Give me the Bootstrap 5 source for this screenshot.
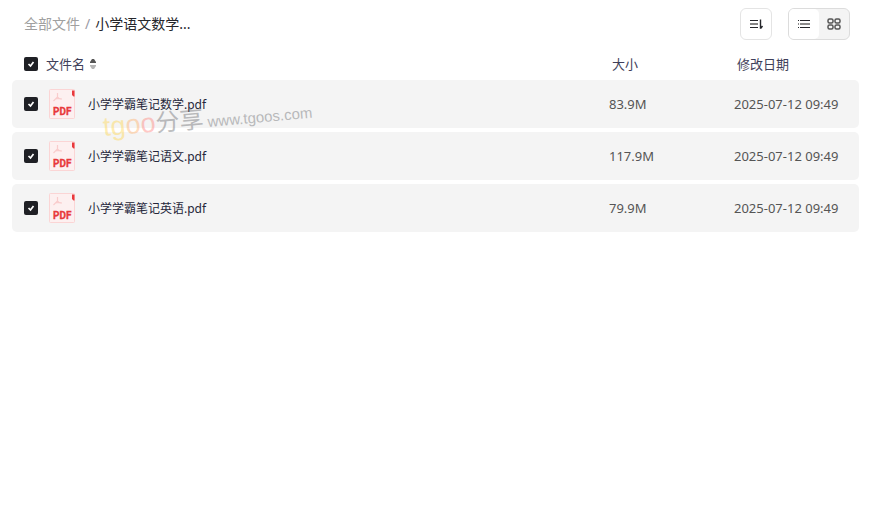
<!DOCTYPE html>
<html lang="zh-CN">
<head>
<meta charset="utf-8">
<meta name="viewport" content="width=device-width, initial-scale=1">
<title>全部文件</title>
<link href="https://cdn.jsdelivr.net/npm/bootstrap@5.3.0/dist/css/bootstrap.min.css" rel="stylesheet">
<style>
body{font-family:"Noto Sans","Noto Sans CJK SC",sans-serif;font-size:13px;line-height:20px;color:#3f3f5a;background:#fff}
.topbar{height:48px;padding:0 24px}
.crumbs{font-size:14px;--bs-breadcrumb-divider-color:#9a9aa5;--bs-breadcrumb-item-padding-x:5px}
.crumbs a{color:#a0a0a0}
.crumbs .active{color:#25262b}
.tool{width:32px;height:32px;border:1px solid #e4e4e4;border-radius:6px;background:#fff;color:#25262b}
.views{border:1px solid #dcdcdc;border-radius:6px;background:#f4f4f4}
.views button{width:30px;height:30px;border:0;border-radius:5px;background:none;color:#555}
.views .on{background:#fff;color:#25262b}
.listing{padding:0 15px 0 12px}
.files{border-collapse:separate;border-spacing:0 4px;table-layout:fixed;margin-top:-4px}
.files th{height:28px;padding:4px 0 0;font-weight:400}
.files td{height:48px;padding:0;background:#f4f4f4;color:#555}
.files td:first-child{border-radius:5px 0 0 5px}
.files td:last-child{border-radius:0 5px 5px 0}
.files .pick{padding-left:12px}
.files th.size,.files th.date{padding-left:3px}
.c-size,.c-date{width:125px}
.sorter{margin-left:4px}
.fname{font-size:12px;color:#25263a;margin-left:12px;padding-top:2px}
.ficon{margin-left:10px}
.form-check-input{width:14px;height:14px;margin:0;border-radius:2px!important;border:0}
.form-check-input:checked{background-color:#1f2025;background-size:14px 14px;background-image:url("data:image/svg+xml,%3Csvg xmlns='http://www.w3.org/2000/svg' viewBox='0 0 14 14'%3E%3Cpath d='M4.5 7l2 2L9.500 5' fill='none' stroke='%23fff' stroke-width='1.700'/%3E%3C/svg%3E")}
.pdfmark{font:bold 10px "Roboto",sans-serif;fill:#e8393c;stroke:#e8393c;stroke-width:.3}
.stamp{left:105px;top:109px;transform:rotate(-5deg);transform-origin:0 100%;pointer-events:none;opacity:.42;white-space:nowrap;line-height:36px;color:#66686c}
.s-brand{font-family:"Liberation Sans",sans-serif;font-size:27px}
.s-cn{font-size:24px}
.s-url{font-family:"Liberation Sans",sans-serif;font-size:15px}
.s-y{color:#ffd54a}.s-o{color:#ffad68}.s-r{color:#ff8078}
</style>
</head>
<body>
<svg class="d-none">
<symbol id="pdf" viewBox="0 0 28 32">
<rect x="1.500" y="1.500" width="25" height="29" rx="1" fill="#fdf0f0" stroke="#fbd5d5"/>
<path d="M9.500 5v4L5.500 13M9.500 9q1 2 4.500 2M7 11l4-.5" fill="none" stroke="#f9cccc" stroke-width="1.200"/>
<path d="M24 2.500h2.500v6h-1L24 7z" fill="#e8393c"/>
<text class="pdfmark" x="5" y="27">PDF</text>
</symbol>
</svg>
<header class="topbar d-flex align-items-center">
<nav aria-label="路径"><ol class="breadcrumb crumbs mb-0"><li class="breadcrumb-item"><a class="text-decoration-none" href="#">全部文件</a></li><li class="breadcrumb-item active" aria-current="page">小学语文数学...</li></ol></nav>
<div class="ms-auto d-flex gap-3">
<button type="button" class="tool p-0 d-flex align-items-center justify-content-center" aria-label="排序"><svg width="16" height="16" fill="none" stroke="currentColor"><path d="M2 4.500h8M2 11.500h8" stroke-width="1.200"/><path d="M2 8h8" stroke-width="1.800" stroke="#777"/><path d="M12.500 3.500v8.500h.5L14.500 10" stroke-width="1.400"/></svg></button>
<div class="views d-flex" role="group" aria-label="视图">
<button type="button" class="on p-0 d-flex align-items-center justify-content-center" aria-label="列表"><svg width="16" height="16" fill="none" stroke="currentColor"><path d="M2 4.500h1M4 4.500h10M2 11.500h1M4 11.500h10"/><path d="M2 8h1M4 8h10" stroke-width="1.600" stroke="#666"/></svg></button>
<button type="button" class="p-0 d-flex align-items-center justify-content-center" aria-label="网格"><svg width="16" height="16" fill="none" stroke="currentColor" stroke-width="1.500"><rect x="2" y="3" width="5" height="4" rx="1.500"/><rect x="9" y="3" width="5" height="4" rx="1.500"/><rect x="2" y="9" width="5" height="4" rx="1.500"/><rect x="9" y="9" width="5" height="4" rx="1.500"/></svg></button>
</div>
</div>
</header>
<main class="listing">
<table class="files w-100">
<colgroup><col><col class="c-size"><col class="c-date"></colgroup>
<thead><tr>
<th class="pick"><div class="d-flex align-items-center"><input class="form-check-input me-2" type="checkbox" id="all" checked aria-label="全选"><label for="all">文件名</label><svg class="sorter" width="8" height="12" aria-hidden="true"><path d="M1 5V4l2-3h2l2 3v1z" fill="#555"/><path d="M1 7h6v1l-2 3H3L1 8z" fill="#b5b5b5"/></svg></div></th>
<th class="size">大小</th><th class="date">修改日期</th></tr></thead>
<tbody>
<tr><td class="pick"><div class="d-flex align-items-center"><input class="form-check-input" type="checkbox" id="f1" checked><svg class="ficon" width="28" height="32" aria-hidden="true"><use href="#pdf"/></svg><label class="fname" for="f1">小学学霸笔记数学.pdf</label></div></td><td>83.9M</td><td>2025-07-12 09:49</td></tr>
<tr><td class="pick"><div class="d-flex align-items-center"><input class="form-check-input" type="checkbox" id="f2" checked><svg class="ficon" width="28" height="32" aria-hidden="true"><use href="#pdf"/></svg><label class="fname" for="f2">小学学霸笔记语文.pdf</label></div></td><td>117.9M</td><td>2025-07-12 09:49</td></tr>
<tr><td class="pick"><div class="d-flex align-items-center"><input class="form-check-input" type="checkbox" id="f3" checked><svg class="ficon" width="28" height="32" aria-hidden="true"><use href="#pdf"/></svg><label class="fname" for="f3">小学学霸笔记英语.pdf</label></div></td><td>79.9M</td><td>2025-07-12 09:49</td></tr>
</tbody>
</table>
</main>
<div class="stamp position-absolute d-flex align-items-baseline"><span class="s-brand"><span class="s-y">tg</span><span class="s-o">o</span><span class="s-r">o</span></span><span class="s-cn">分享</span><span class="s-url ms-1">www.tgoos.com</span></div>
<script src="https://cdn.jsdelivr.net/npm/bootstrap@5.3.0/dist/js/bootstrap.bundle.min.js"></script>
</body>
</html>
